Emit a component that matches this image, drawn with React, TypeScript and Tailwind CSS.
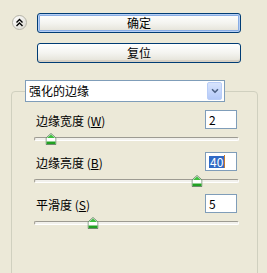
import { ChevronDown } from "lucide-react";

const font = "font-['Noto_Sans_CJK_SC','Liberation_Sans',sans-serif]";

function XpButton({ label, isDefault }: { label: string; isDefault?: boolean }) {
  return (
    <button
      className={`w-[204px] h-[20px] rounded-[3px] border border-[#003c74] bg-gradient-to-b from-[#ffffff] via-[#f4f4f0] to-[#e3e1d6] text-[12px] leading-none text-black flex items-center justify-center ${
        isDefault ? "shadow-[inset_0_0_0_1px_#b6cff5,inset_0_0_0_2px_#89ade4]" : "shadow-[inset_0_-2px_0_#d6d0c5]"
      }`}
    >
      {label}
    </button>
  );
}

function Thumb() {
  return (
    <svg width="11" height="12" viewBox="0 0 11 12">
      <path d="M5.5 0.5 L10.5 5 V11.5 H0.5 V5 Z" fill="#ffffff" stroke="#6e8a6e" />
      <path d="M5.5 1.5 L9.5 5 H1.5 Z" fill="#3fbf3f" />
      <rect x="1" y="8.5" width="9" height="2.5" fill="#21a121" />
    </svg>
  );
}

function Slider({ pct }: { pct: number }) {
  return (
    <div className="relative ml-[22px] w-[205px] h-[12px] mt-[4px] flex items-center">
      <div className="w-full h-[4px] rounded-[2px] border border-t-[#9d9b92] border-l-[#9d9b92] border-b-white border-r-white bg-[#f2f1ec]" />
      <div className="absolute top-0 -translate-x-1/2" style={{ left: `${pct}%` }}>
        <Thumb />
      </div>
    </div>
  );
}

function Row({
  label,
  mnemonic,
  value,
  selected,
  pct,
  first,
}: {
  label: string;
  mnemonic: string;
  value: string;
  selected?: boolean;
  pct: number;
  first?: boolean;
}) {
  return (
    <div className={first ? "mt-[8px]" : "mt-[7px]"}>
      <div className="flex items-center justify-between pl-[24px] pr-[20px]">
        <span className="text-[12px] leading-none text-black mt-[3px]">
          {label} (<span className="underline">{mnemonic}</span>)
        </span>
        <div className="w-[32px] h-[19px] border border-[#7f9db9] bg-white flex items-center pl-[3px] text-[12px] leading-none">
          {selected ? (
            <>
              <span className="bg-[#316ac5] text-white px-px">{value}</span>
              <span className="w-px h-[13px] bg-[#c87a2a]" />
            </>
          ) : (
            <span>{value}</span>
          )}
        </div>
      </div>
      <Slider pct={pct} />
    </div>
  );
}

export default function App() {
  return (
    <div className={`w-[267px] h-[273px] bg-[#ece9d8] overflow-hidden ${font}`}>
      <div className="flex pt-[13px]">
        <div className="pl-[12px] pr-[10px] pt-[2px]">
          <div className="w-[15px] h-[15px] rounded-full border border-[#b5b3a7] bg-gradient-to-br from-white to-[#dcdad0] flex items-center justify-center">
            <svg width="9" height="9" viewBox="0 0 9 9" fill="none" stroke="#000" strokeWidth="1.4">
              <path d="M1.5 4.5 L4.5 1.5 L7.5 4.5" />
              <path d="M1.5 8 L4.5 5 L7.5 8" />
            </svg>
          </div>
        </div>
        <div className="flex flex-col gap-[10px]">
          <XpButton label="确定" isDefault />
          <XpButton label="复位" />
        </div>
      </div>

      <div className="mt-[28px] ml-[11px] w-[247px] h-[200px] border border-[#d0d0bf] rounded-[4px]">
        <div className="-mt-[12px] ml-[13px] w-[200px] h-[22px] border border-[#7f9db9] bg-white flex items-center justify-between pl-[3px] pr-[2px]">
          <span className="text-[12px] leading-none text-black">强化的边缘</span>
          <div className="w-[15px] h-[18px] rounded-[2px] border border-[#b9cdf7] bg-gradient-to-b from-[#d8e4fd] to-[#b4c9f8] flex items-center justify-center">
            <ChevronDown className="w-[10px] h-[10px] text-[#4d6185]" strokeWidth={4} />
          </div>
        </div>
        <Row label="边缘宽度" mnemonic="W" value="2" pct={8.3} first />
        <Row label="边缘亮度" mnemonic="B" value="40" selected pct={79.5} />
        <Row label="平滑度" mnemonic="S" value="5" pct={28.8} />
      </div>
    </div>
  );
}
